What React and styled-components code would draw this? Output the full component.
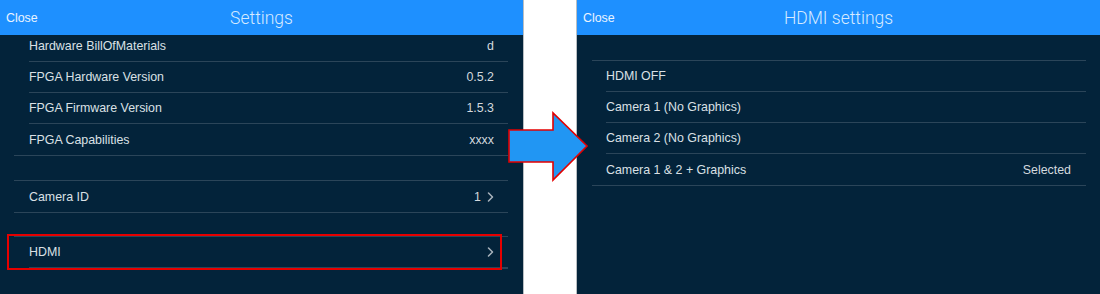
import React from "react";
import styled, { createGlobalStyle } from "styled-components";

const GlobalStyle = createGlobalStyle`
  html, body {
    margin: 0;
    padding: 0;
    background: #ffffff;
  }
  body {
    font-family: "Liberation Sans", Arial, sans-serif;
  }
`;

const Page = styled.div`
  position: relative;
  display: flex;
  width: 1100px;
  height: 294px;
  overflow: hidden;
`;

const Panel = styled.div`
  width: ${(props) => props.width}px;
  flex-shrink: 0;
  display: flex;
  flex-direction: column;
  background: #03233a;
  overflow: hidden;
`;

const Spacer = styled.div`
  width: 54px;
  flex-shrink: 0;
  background: #ffffff;
  border-left: 1px solid #b9bec2;
  border-right: 1px solid #b9bec2;
  box-sizing: border-box;
`;

const Header = styled.div`
  height: 35px;
  flex-shrink: 0;
  display: grid;
  grid-template-columns: 1fr auto 1fr;
  align-items: center;
  background: #1e90ff;
`;

const CloseButton = styled.button`
  justify-self: start;
  background: none;
  border: none;
  padding: 0 0 0 6px;
  color: #eaf4ff;
  font-family: "Liberation Sans", Arial, sans-serif;
  font-size: 12.4px;
  cursor: pointer;
`;

const Title = styled.div`
  font-family: Roboto, "Liberation Sans", sans-serif;
  font-weight: 300;
  font-size: 17.5px;
  color: #d6eaff;
  padding-top: 1px;
`;

const List = styled.div`
  display: flex;
  flex-direction: column;
`;

const Group = styled.div`
  position: relative;
  margin: ${(props) => props.gap}px ${(props) => props.right}px 0
    ${(props) => props.left}px;
  border-top: ${(props) => (props.open ? "none" : "1px solid #2b4559")};
  border-bottom: 1px solid #2b4559;
`;

const Row = styled.div`
  height: 31px;
  margin-left: ${(props) => props.inset}px;
  padding-right: ${(props) => props.pad}px;
  display: flex;
  align-items: center;
  justify-content: space-between;
  border-bottom: 1px solid #2b4559;
  font-size: 12.4px;
  color: #dae0e5;
  box-sizing: border-box;
  &:last-child {
    border-bottom: none;
  }
`;

const Value = styled.span`
  display: flex;
  align-items: center;
  gap: 6px;
  color: #d3d9de;
`;

const Highlight = styled.span`
  position: absolute;
  top: -3px;
  bottom: -2px;
  left: -7px;
  right: 6px;
  border: 2px solid #e60000;
  pointer-events: none;
`;

const Arrow = styled.svg`
  position: absolute;
  left: 507px;
  top: 111px;
`;

const Chevron = () => (
  <svg width="7" height="10" viewBox="0 0 7 10">
    <path
      d="M1.5 1 L5.5 5 L1.5 9"
      fill="none"
      stroke="#aab4bd"
      strokeWidth="1.5"
      strokeLinecap="round"
      strokeLinejoin="round"
    />
  </svg>
);

const SettingRow = ({ label, value, chevron, inset = 15, pad = 14 }) => (
  <Row inset={inset} pad={pad}>
    <span>{label}</span>
    <Value>
      {value}
      {chevron && <Chevron />}
    </Value>
  </Row>
);

const hardware = [
  ["Hardware BillOfMaterials", "d"],
  ["FPGA Hardware Version", "0.5.2"],
  ["FPGA Firmware Version", "1.5.3"],
  ["FPGA Capabilities", "xxxx"],
];

const hdmiModes = [
  ["HDMI OFF", ""],
  ["Camera 1 (No Graphics)", ""],
  ["Camera 2 (No Graphics)", ""],
  ["Camera 1 & 2 + Graphics", "Selected"],
];

const App = () => {
  return (
    <>
      <GlobalStyle />
      <Page>
        <Panel width={523}>
          <Header>
            <CloseButton>Close</CloseButton>
            <Title>Settings</Title>
          </Header>
          <List>
            <Group gap={-4} left={14} right={15} open>
              {hardware.map(([label, value]) => (
                <SettingRow key={label} label={label} value={value} />
              ))}
            </Group>
            <Group gap={24} left={14} right={15}>
              <SettingRow label="Camera ID" value="1" chevron />
            </Group>
            <Group gap={23} left={14} right={15}>
              <SettingRow label="HDMI" value="" chevron />
              <Highlight />
            </Group>
          </List>
        </Panel>
        <Spacer />
        <Panel width={523}>
          <Header>
            <CloseButton>Close</CloseButton>
            <Title>HDMI settings</Title>
          </Header>
          <List>
            <Group gap={25} left={15} right={14}>
              {hdmiModes.map(([label, value]) => (
                <SettingRow
                  key={label}
                  label={label}
                  value={value}
                  inset={14}
                  pad={15}
                />
              ))}
            </Group>
          </List>
        </Panel>
        <Arrow width="84" height="72" viewBox="0 0 84 72">
          <polygon
            points="2,19 46,19 46,2 80,35 46,69 46,51 2,51"
            fill="#2196f3"
            stroke="#e30000"
            strokeWidth="1.6"
            strokeLinejoin="miter"
          />
        </Arrow>
      </Page>
    </>
  );
};

export default App;
